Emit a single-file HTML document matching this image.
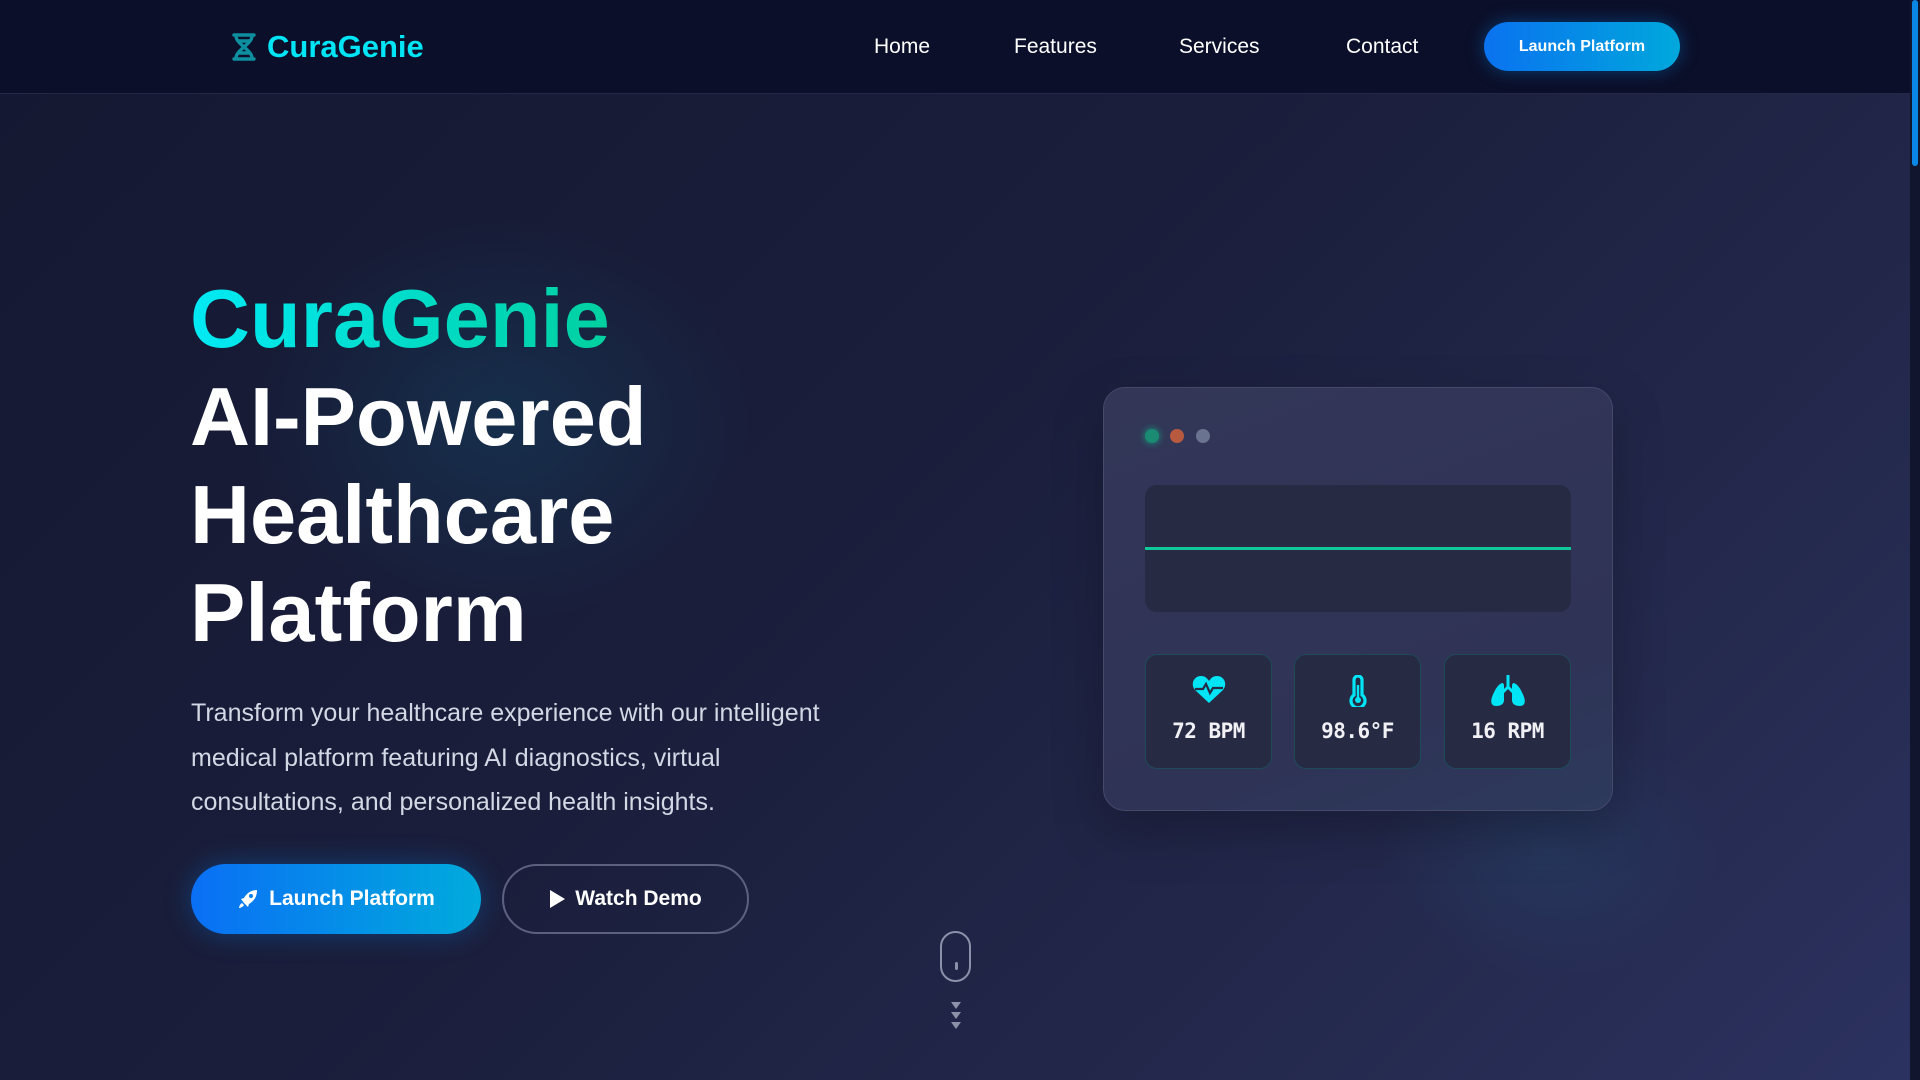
<!DOCTYPE html>
<html><head><meta charset="utf-8"><style>
*{margin:0;padding:0;box-sizing:border-box}
html,body{width:1920px;height:1080px;overflow:hidden}
body{font-family:"Liberation Sans",sans-serif;color:#fff;position:relative;
background:linear-gradient(135deg,#141831 0%,#1a1e3b 45%,#252a4f 80%,#2c3260 100%);}
.glow1{position:absolute;left:250px;top:220px;width:500px;height:400px;border-radius:50%;background:radial-gradient(closest-side,rgba(20,70,100,.45),rgba(20,70,100,0));}
.glow2{position:absolute;left:1380px;top:720px;width:340px;height:260px;border-radius:50%;background:radial-gradient(closest-side,rgba(40,90,130,.25),rgba(40,90,130,0));}
nav{position:absolute;left:0;top:0;width:1910px;height:94px;background:#0b0f29;border-bottom:1px solid #23274a}
.logo{position:absolute;left:231px;top:29px;display:flex;align-items:center;gap:10px;color:#00e5f5;font-weight:700;font-size:31px}
.nl{position:absolute;top:35px;font-size:21px;color:#fff}
.nbtn{position:absolute;left:1484px;top:22px;width:196px;height:49px;border-radius:25px;background:linear-gradient(90deg,#0a72f0,#00a8dc);font-weight:700;font-size:16px;display:flex;align-items:center;justify-content:center;box-shadow:0 0 18px rgba(0,150,255,.35)}
.sb{position:absolute;right:0;top:0;width:10px;height:1080px;background:#11152e}
.sb i{position:absolute;left:2px;top:0;width:6px;height:166px;background:#0a86e6;border-radius:3px}
h1{position:absolute;left:190px;top:270px;font-size:83px;line-height:98px;font-weight:700;letter-spacing:0}
h1 .g{background:linear-gradient(90deg,#00eaf5,#00d0a0);-webkit-background-clip:text;color:transparent}
p.d{position:absolute;left:191px;top:691px;width:650px;font-size:25px;line-height:44.5px;color:#d4d7e4}
.b1{position:absolute;left:191px;top:864px;width:290px;height:70px;border-radius:35px;background:linear-gradient(90deg,#0a6ff5,#00abdc);display:flex;align-items:center;justify-content:center;gap:10px;font-weight:700;font-size:21px;box-shadow:0 0 28px rgba(0,140,255,.3)}
.b2{position:absolute;left:502px;top:864px;width:247px;height:70px;border-radius:35px;border:2px solid #5d6180;display:flex;align-items:center;justify-content:center;gap:10px;font-weight:700;font-size:21px}
.mouse{position:absolute;left:940px;top:931px;width:31px;height:51px;border:2px solid #8c90a8;border-radius:16px}
.mouse i{position:absolute;left:12.5px;top:29px;width:3px;height:8px;border-radius:2px;background:#8c90a8}
.card{position:absolute;left:1103px;top:387px;width:510px;height:424px;border-radius:22px;background:linear-gradient(160deg,#333657,#2f3356 70%,#2d3a5c);border:1.5px solid #45496a;box-shadow:0 20px 50px rgba(0,0,0,.25)}
.dot{position:absolute;top:429px;width:14px;height:14px;border-radius:50%}
.chart{position:absolute;left:1145px;top:485px;width:426px;height:127px;border-radius:12px;background:#262a43}
.chart i{position:absolute;left:0;top:62px;width:100%;height:3px;background:#10c79a}
.st{position:absolute;top:654px;width:127px;height:115px;border-radius:12px;background:#262a43;border:1px solid #1e4a5a;text-align:center}
.st svg{position:absolute;left:50%;top:20px;transform:translateX(-50%)}
.st span{position:absolute;left:0;right:0;top:64px;font-family:"DejaVu Sans Mono","Liberation Mono",monospace;font-weight:700;font-size:21px;letter-spacing:-0.5px;color:#f0f0f5}
</style></head><body>
<div class="glow1"></div><div class="glow2"></div>
<nav>
<div class="logo"><svg width="26" height="28" viewBox="0 0 26 28"><path d="M3 2h20M3 26h20M5 3c0 8 16 14 16 22M21 3c0 8-16 14-16 22M8 8h10M8 20h10" stroke="#0d8fa0" stroke-width="3.4" fill="none" stroke-linecap="round"/></svg>CuraGenie</div>
<div class="nl" style="left:874px">Home</div>
<div class="nl" style="left:1014px">Features</div>
<div class="nl" style="left:1179px">Services</div>
<div class="nl" style="left:1346px">Contact</div>
<div class="nbtn">Launch Platform</div>
</nav>
<div class="sb"><i></i></div>
<h1><span class="g">CuraGenie</span><br>AI-Powered<br>Healthcare<br>Platform</h1>
<p class="d">Transform your healthcare experience with our intelligent medical platform featuring AI diagnostics, virtual consultations, and personalized health insights.</p>
<div class="b1"><svg width="22" height="22" viewBox="0 0 22 22"><path d="M20 2c-6 0-10 3-13 8l-3 1 3 4 4 4 1-3c5-3 8-7 8-14zM5 15c-2 1-3 4-3 5 1 0 4-1 5-3z" fill="#fff"/><circle cx="14" cy="8" r="2" fill="#0a80ea"/></svg>Launch Platform</div>
<div class="b2"><svg width="16" height="20" viewBox="0 0 16 20"><path d="M1 1v18l15-9z" fill="#fff"/></svg>Watch Demo</div>
<div class="mouse"><i></i></div>
<svg style="position:absolute;left:950px;top:1002px" width="12" height="27" viewBox="0 0 12 27"><path d="M1 0h10l-5 7zM1 10h10l-5 7zM1 20h10l-5 7z" fill="#8c90a8"/></svg>
<div class="card"></div>
<div class="dot" style="left:1145px;background:#1a8a72;box-shadow:0 0 8px #12a080"></div>
<div class="dot" style="left:1170px;background:#b85a40"></div>
<div class="dot" style="left:1196px;background:#6a7490"></div>
<div class="chart"><i></i></div>
<div class="st" style="left:1145px"><svg width="34" height="30" viewBox="0 0 34 30"><path d="M17 28L3 15C-2 9 2 1 9 1c4 0 6 2 8 5 2-3 4-5 8-5 7 0 11 8 6 14z" fill="#00e5f5"/><path d="M3 14h8l3-5 4 9 3-5h10" stroke="#262a43" stroke-width="2.2" fill="none"/></svg><span>72 BPM</span></div>
<div class="st" style="left:1294px"><svg width="20" height="32" viewBox="0 0 20 32"><path d="M6 20V5a4 4 0 018 0v15a7 7 0 11-8 0z" fill="none" stroke="#00e5f5" stroke-width="3.2"/><circle cx="10" cy="25" r="3" fill="#00e5f5"/><path d="M10 10v14" stroke="#00e5f5" stroke-width="2.4"/></svg><span>98.6°F</span></div>
<div class="st" style="left:1444px"><svg width="40" height="32" viewBox="0 0 40 32"><path d="M20 0v14M20 12l-5 5M20 12l5 5" stroke="#00e5f5" stroke-width="3" fill="none"/><path d="M15 8c-4 0-8 6-11 14-2 6 0 9 4 9 5 0 8-2 8-6V10z" fill="#00e5f5"/><path d="M25 8c4 0 8 6 11 14 2 6 0 9-4 9-5 0-8-2-8-6V10z" fill="#00e5f5"/></svg><span>16 RPM</span></div>
</body></html>
